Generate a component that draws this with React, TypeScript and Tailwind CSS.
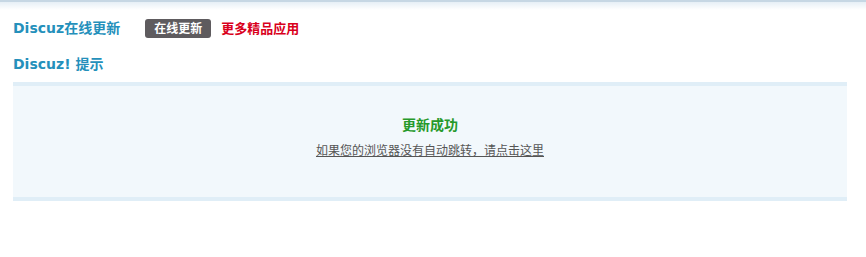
export default function App() {
  const font = "font-['Tahoma','DejaVu_Sans','Noto_Sans_CJK_SC',sans-serif]";
  return (
    <div className={`h-[257px] w-full bg-white ${font}`}>
      <div className="h-[10px] border-t-2 border-[#c6d7e4] bg-gradient-to-b from-[#e6eff6] to-white" />
      <div className="px-[13px]">
        <div className="mt-[9px] flex h-[19px] items-center">
          <h3 className="text-[14px] font-bold leading-[19px] text-[#2490bb]">Discuz在线更新</h3>
          <a className="ml-[25px] flex h-[19px] items-center rounded-[3px] bg-[#5e5b5e] px-[9px] text-[12px] font-bold text-white">
            在线更新
          </a>
          <a className="ml-[10px] text-[13px] font-bold text-[#d9001c]">更多精品应用</a>
        </div>
        <h3 className="mt-[16px] text-[14px] font-bold leading-[20px] text-[#2490bb]">Discuz! 提示</h3>
        <div className="mt-[8px] h-[119px] w-[834px] border-y-4 border-[#e0eef7] bg-[#f2f8fc] text-center">
          <div className="pt-[29px] text-[14px] font-bold leading-[20px] text-[#26992a]">更新成功</div>
          <a className="mt-[7px] inline-block text-[12px] leading-[18px] text-[#555] underline">
            如果您的浏览器没有自动跳转，请点击这里
          </a>
        </div>
      </div>
    </div>
  );
}
